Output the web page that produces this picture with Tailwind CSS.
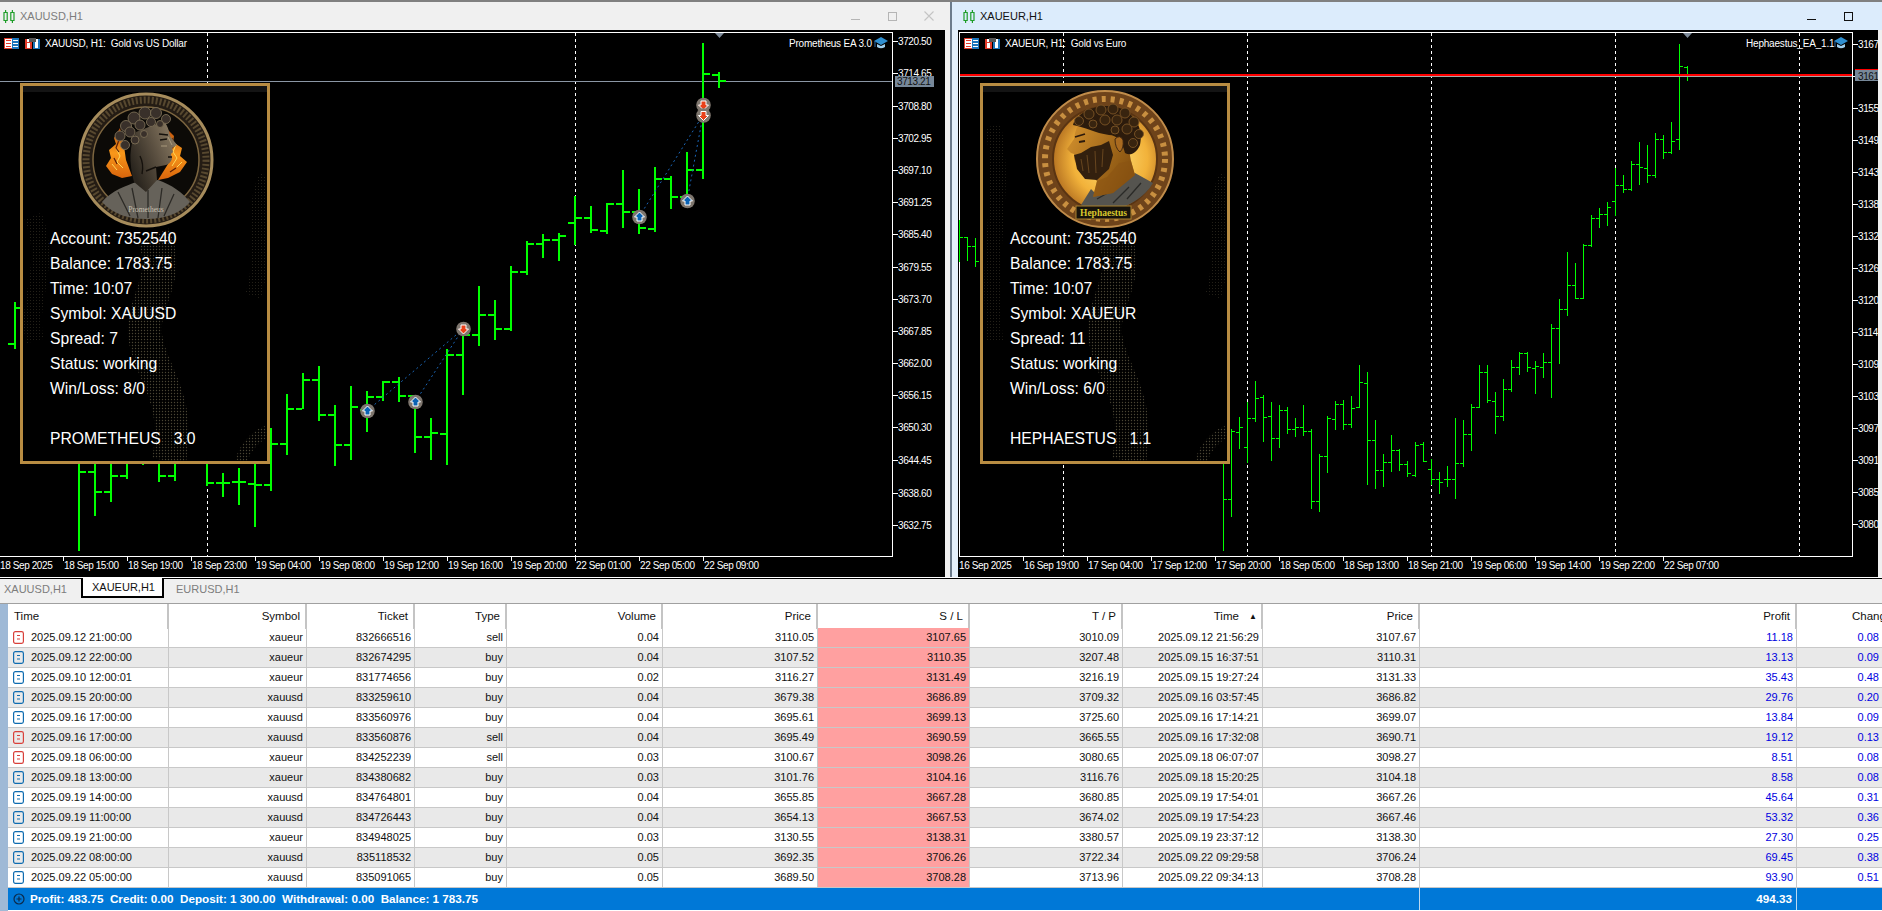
<!DOCTYPE html>
<html lang="en">
<head>
    <meta charset="UTF-8">
    <title>MetaTrader - XAUUSD, XAUEUR</title>
    <script src="https://cdn.jsdelivr.net/npm/@tailwindcss/browser@4"></script>
</head>
<body class="w-[1882px] h-[911px] overflow-hidden bg-[#f0f0f0] font-['Liberation_Sans',sans-serif]">
    <!-- shared patterns for the info panels -->
    <svg width="0" height="0" class="absolute">
        <defs>
            <pattern id="dots" width="3" height="3" patternUnits="userSpaceOnUse"><circle cx="1.5" cy="1.5" r="0.7" fill="#4a4534"/></pattern>
            <pattern id="dotsFaint" width="3" height="3" patternUnits="userSpaceOnUse"><circle cx="1.5" cy="1.5" r="0.5" fill="#2e2a20"/></pattern>
            <radialGradient id="heph" cx="0.55" cy="0.5" r="0.6"><stop offset="0" stop-color="#ffe27a"/><stop offset="0.6" stop-color="#f2b23a"/><stop offset="1" stop-color="#a8641c"/></radialGradient>
            <linearGradient id="hephSkin" x1="0" y1="0" x2="1" y2="0.6"><stop offset="0" stop-color="#d8952f"/><stop offset="1" stop-color="#84500f"/></linearGradient>
            <linearGradient id="flame" x1="0" y1="0" x2="0" y2="1"><stop offset="0" stop-color="#b84c0c"/><stop offset="0.5" stop-color="#f9981a"/><stop offset="1" stop-color="#d8640c"/></linearGradient>
            <linearGradient id="bronze" x1="1" y1="0" x2="0" y2="0.6"><stop offset="0" stop-color="#96866c"/><stop offset="0.55" stop-color="#5a4f40"/><stop offset="1" stop-color="#2a251e"/></linearGradient>
        </defs>
    </svg>

    <div class="border-t-2 border-[#808080] flex h-[577px]">
        <!-- XAUUSD window -->
        <div class="w-[950px] flex flex-col shrink-0">
            <div class="h-[28px] flex items-center pl-[3px] pr-[16px] bg-[#f0f0f0]">
                <svg width="12" height="15" viewBox="0 0 12 15" fill="none" stroke="#1f9e2a" stroke-width="1.2"><path d="M1 3.5h3.2v8H1zM2.6 1v2.500M2.6 11.500V14M7.800 3.500H11v8H7.800zM9.400 1v2.500M9.400 11.500V14"/></svg>
                <span class="ml-[5px] text-[11px] text-[#7d7d7d]">XAUUSD,H1</span>
                <div class="ml-auto flex items-center gap-[27px]">
                    <svg width="10" height="10" viewBox="0 0 10 10"><rect x="0" y="8" width="9" height="1" fill="#b5b5b5"/></svg>
                    <svg width="9" height="9" viewBox="0 0 9 9" fill="none"><rect x=".5" y=".5" width="8" height="8" stroke="#b5b5b5"/></svg>
                    <svg width="10" height="10" viewBox="0 0 10 10" stroke="#c4c4c4" stroke-width="1.1"><path d="M.5.5l9 9M9.500.5l-9 9"/></svg>
                </div>
            </div>
            <div class="relative flex-1 flex bg-black">
                <svg id="chart_usd" width="945" height="547" viewBox="0 30 945 547" class="block shrink-0" shape-rendering="crispEdges" font-family="Liberation Sans, sans-serif" font-size="10" letter-spacing="-0.4"></svg>
                <div class="w-[5px] bg-[#f0f0f0]"></div>
                <!-- info panel -->
                <div class="absolute left-[20px] top-[53px] w-[250px] h-[381px] bg-black border-[3px] border-[#b88c42] text-white text-[15.700px] leading-[25px] overflow-hidden">
                    <div class="h-[6px] bg-[#141414]"></div>
                    <svg class="absolute inset-0" width="244" height="375" viewBox="0 0 244 375" fill="none">
                        <path d="M130 150C150 190 118 215 122 250C128 290 158 310 146 375" stroke="url(#dots)" stroke-width="34"/>
                        <path d="M10 130C30 180 2 215 12 255" stroke="url(#dotsFaint)" stroke-width="18"/>
                        <path d="M244 90C226 130 244 170 230 210" stroke="url(#dotsFaint)" stroke-width="16"/>
                        <path d="M244 345C230 352 222 362 218 375" stroke="url(#dots)" stroke-width="12"/>
                    </svg>
                    <svg class="relative block ml-[53px] mt-[-2px]" width="140" height="140" viewBox="0 0 140 140">
                        <circle cx="70" cy="70" r="66" fill="#241c14" stroke="#a68c5c" stroke-width="3"/>
                        <circle cx="70" cy="70" r="60" fill="none" stroke="#57482f" stroke-width="7" stroke-dasharray="2 2"/>
                        <circle cx="70" cy="70" r="53" fill="#0c0a07" stroke="#7d6640" stroke-width="1.500"/>
                        <!-- flames -->
                        <path d="M44 38L38 48L40 54L33 60L35 68L30 76L36 84L46 88L56 86L50 70L48 56Z" fill="url(#flame)"/>
                        <path d="M90 38L98 46L97 52L106 58L104 66L111 72L104 82L92 88L82 90L92 74L94 56Z" fill="url(#flame)"/>
                        <path d="M40 58l4 8-3 6 6 6M36 74l5 6M100 54l-3 8 4 6-5 8M106 72l-5 5" stroke="#ffd85a" stroke-width="1" fill="none"/>
                        <path d="M43 50l-3 8 3 4M38 68l3 6M96 48l2 8-4 4M100 78l-6 4" stroke="#5c1f06" stroke-width="1.200" fill="none"/>
                        <!-- bust -->
                        <path d="M26 112C36 100 50 96 60 92L82 90C96 95 106 102 114 112C102 126 84 129 70 129C54 129 38 125 26 112Z" fill="#66625a"/>
                        <path d="M42 102l12 24M56 98l6 30M72 100l0 28M86 98l-4 30M98 104l-10 22" stroke="#2c2a26" stroke-width="1.300"/>
                        <path d="M60 42L88 31Q93 38 94 46L101 55L96 58L97 62L95 64L96 69Q94 74 90 75L80 77L81 90L70 102L58 92Q50 62 60 42Z" fill="url(#bronze)"/>
                        <path d="M83 44l9 1M84 50l7-1M92 67l4 0M80 77l-10 4M64 66q4 8 2 18" stroke="#15110c" stroke-width="1.400" fill="none"/>
                        <path d="M92 47l4 8M85 56l6 0" stroke="#b9a888" stroke-width="0.800" fill="none"/>
                        <g fill="#39302a" stroke="#7c6e56" stroke-width="0.900">
                            <circle cx="50" cy="36" r="5.500"/><circle cx="58" cy="28" r="6"/><circle cx="69" cy="23" r="6"/><circle cx="80" cy="23" r="5.500"/><circle cx="90" cy="29" r="4.500"/>
                            <circle cx="44" cy="46" r="5"/><circle cx="54" cy="42" r="5"/><circle cx="64" cy="35" r="5"/><circle cx="75" cy="32" r="4.500"/><circle cx="84" cy="34" r="3.500"/><circle cx="49" cy="55" r="4.500"/><circle cx="59" cy="50" r="4"/><circle cx="68" cy="44" r="3.500"/>
                        </g>
                        <text x="70" y="122" text-anchor="middle" font-size="7.500" fill="#c8c0b0" font-family="Liberation Serif, serif">Prometheus</text>
                    </svg>
                    <div class="relative pl-[27px] mt-[-4px]">
                        <div>Account: 7352540</div>
                        <div>Balance: 1783.75</div>
                        <div>Time: 10:07</div>
                        <div>Symbol: XAUUSD</div>
                        <div>Spread: 7</div>
                        <div>Status: working</div>
                        <div>Win/Loss: 8/0</div>
                        <div class="h-[25px]"></div>
                        <div class="whitespace-pre">PROMETHEUS   3.0</div>
                    </div>
                </div>
            </div>
        </div>
        <div class="w-[2px] bg-[#6b7b8c]"></div>
        <!-- XAUEUR window -->
        <div class="flex-1 flex flex-col bg-[#e4f0fb]">
            <div class="h-[28px] flex items-center pl-[11px] pr-[29px] bg-[#dcecfc]">
                <svg width="12" height="15" viewBox="0 0 12 15" fill="none" stroke="#1f9e2a" stroke-width="1.2"><path d="M1 3.5h3.2v8H1zM2.6 1v2.500M2.6 11.500V14M7.800 3.500H11v8H7.800zM9.400 1v2.500M9.400 11.500V14"/></svg>
                <span class="ml-[5px] text-[11px] text-[#111]">XAUEUR,H1</span>
                <div class="ml-auto flex items-center gap-[27px]">
                    <svg width="10" height="10" viewBox="0 0 10 10"><rect x="0" y="8" width="9" height="1" fill="#111"/></svg>
                    <svg width="9" height="9" viewBox="0 0 9 9" fill="none"><rect x=".5" y=".5" width="8" height="8" stroke="#111"/></svg>
                </div>
            </div>
            <div class="relative flex-1 flex">
                <div class="w-[6px]"></div>
                <svg id="chart_eur" width="920" height="547" viewBox="958 30 920 547" class="block shrink-0 bg-black" shape-rendering="crispEdges" font-family="Liberation Sans, sans-serif" font-size="10" letter-spacing="-0.4"></svg>
                <div class="w-[4px] bg-[#f0f0f0]"></div>
                <!-- info panel -->
                <div class="absolute left-[28px] top-[53px] w-[250px] h-[381px] bg-black border-[3px] border-[#b88c42] text-white text-[15.700px] leading-[25px] overflow-hidden">
                    <div class="h-[6px] bg-[#141414]"></div>
                    <svg class="absolute inset-0" width="244" height="375" viewBox="0 0 244 375" fill="none">
                        <path d="M130 150C150 190 118 215 122 250C128 290 158 310 146 375" stroke="url(#dots)" stroke-width="34"/>
                        <path d="M10 40C24 110 2 160 12 255" stroke="url(#dotsFaint)" stroke-width="16"/>
                        <path d="M244 90C226 130 244 170 230 210" stroke="url(#dotsFaint)" stroke-width="16"/>
                        <path d="M244 345C230 352 222 362 218 375" stroke="url(#dots)" stroke-width="12"/>
                    </svg>
                    <svg class="relative block mx-auto mt-[-3px]" width="140" height="140" viewBox="0 0 140 140">
                        <circle cx="70" cy="70" r="68" fill="#6e431a" stroke="#c08c4a" stroke-width="2"/>
                        <circle cx="70" cy="70" r="60" fill="none" stroke="#c88f40" stroke-width="6" stroke-dasharray="4 5"/>
                        <circle cx="70" cy="70" r="52" fill="url(#heph)" stroke="#5a3412" stroke-width="2"/>
                        <!-- toga -->
                        <path d="M46 116L56 100L62 106L82 100L100 84L118 94C110 108 92 120 70 122C60 122 52 120 46 116Z" fill="#55544f"/>
                        <path d="M62 110l14-8M78 114l16-16M92 110l14-16" stroke="#2a2a27" stroke-width="1.300"/>
                        <!-- head -->
                        <path d="M44 32L40 44L39 50L32 60L36 64L39 65L39 70L44 80L55 86L62 92L58 108L78 104L100 86L96 72L92 50L76 30Z" fill="url(#hephSkin)"/>
                        <path d="M62 92L72 88L84 74L96 72L100 86L78 104L58 108Z" fill="#8b5413" opacity="0.6"/>
                        <path d="M40 70L39 66L46 64L56 58L66 56L74 52L78 66L74 80L62 91L50 90L42 80Z" fill="#33200e"/>
                        <path d="M46 70l2 12M52 66l2 18M60 62l1 22M68 60l-1 18" stroke="#6d4a20" stroke-width="0.900"/>
                        <path d="M40 48l10-3M44 53l6-1" stroke="#2c1a0c" stroke-width="1.800"/>
                        <path d="M38 36C42 22 66 13 84 19C100 24 109 40 105 56C101 65 95 67 90 64C87 52 82 46 74 46C60 44 50 38 38 36Z" fill="#2c1b0c"/>
                        <g fill="#38240f" stroke="#7c5526" stroke-width="0.900">
                            <circle cx="44" cy="32" r="4.500"/><circle cx="54" cy="25" r="5"/><circle cx="66" cy="21" r="5"/><circle cx="78" cy="20" r="5"/><circle cx="90" cy="24" r="5"/><circle cx="99" cy="33" r="5"/><circle cx="104" cy="45" r="4.500"/>
                            <circle cx="58" cy="35" r="4"/><circle cx="70" cy="31" r="5"/><circle cx="82" cy="31" r="5"/><circle cx="92" cy="40" r="5"/><circle cx="98" cy="54" r="4.500"/><circle cx="80" cy="41" r="4"/>
                        </g>
                        <path d="M80 50q5-5 8 1q1 8-3 12q-5-4-5-13Z" fill="#a96a20" stroke="#3a2210" stroke-width="0.900"/>
                        <rect x="41" y="117" width="55" height="13" fill="#17130c" stroke="#a8802f"/>
                        <text x="68.500" y="127" text-anchor="middle" font-size="9.500" font-weight="700" fill="#d8c82c" font-family="Liberation Serif, serif">Hephaestus</text>
                    </svg>
                    <div class="relative pl-[27px] mt-[-3px]">
                        <div>Account: 7352540</div>
                        <div>Balance: 1783.75</div>
                        <div>Time: 10:07</div>
                        <div>Symbol: XAUEUR</div>
                        <div>Spread: 11</div>
                        <div>Status: working</div>
                        <div>Win/Loss: 6/0</div>
                        <div class="h-[25px]"></div>
                        <div class="whitespace-pre">HEPHAESTUS   1.1</div>
                    </div>
                </div>
            </div>
        </div>
    </div>

    <!-- Tabs -->
    <div class="h-[1px] bg-white"></div>
    <div class="h-[1px] bg-black"></div>
    <div class="h-[24px] flex items-start text-[11px] text-[#7d7d7d]">
        <div class="w-[81px] h-[19px] pl-[4px] leading-[20px]">XAUUSD,H1</div>
        <div class="w-[83px] h-[20px] pl-[9px] leading-[19px] bg-white border-x-2 border-b-2 border-black text-[#111] mt-[-1px]">XAUEUR,H1</div>
        <div class="h-[19px] pl-[12px] leading-[20px]">EURUSD,H1</div>
    </div>

    <!-- Trade history -->
    <div class="h-[308px] bg-white border-t border-[#a0a0a0] flex text-[11px] text-[#111]">
        <div class="w-[8px] h-full bg-[#9fb9d6] shrink-0"></div>
        <div class="flex-1 overflow-hidden">
            <div class="grid grid-cols-[161px_138px_108px_92px_156px_155px_152px_153px_140px_157px_377px_85px] h-[24px] leading-[24px] text-[#111] text-[11.500px] *:border-r-2 *:border-[#c4c4c4] *:pr-[5px] *:text-right">
                <div class="!text-left pl-[6px]">Time</div>
                <div>Symbol</div>
                <div>Ticket</div>
                <div>Type</div>
                <div>Volume</div>
                <div>Price</div>
                <div>S / L</div>
                <div>T / P</div>
                <div class="!pr-[4px]">Time <span class="text-[8px] ml-[7px] align-[1px]">▲</span></div>
                <div>Price</div>
                <div>Profit</div>
                <div class="!border-r-0 !text-left pl-[55px] whitespace-nowrap overflow-hidden">Change</div>
            </div>
            <div id="table_rows"></div>
            <div class="grid grid-cols-[1412px_377px_85px] h-[22px] leading-[22px] bg-[#0078d7] text-white text-[11.700px] font-bold">
                <div class="flex items-center pl-[5px] border-r border-[#bcd8f0]">
                    <svg width="12" height="12" viewBox="0 0 12 12" fill="none" stroke="#0c2a4a" stroke-width="1.200"><circle cx="6" cy="6" r="5"/><path d="M3.500 6h5M6 3.500v5"/></svg>
                    <span class="ml-[5px] whitespace-pre">Profit: 483.75  Credit: 0.00  Deposit: 1 300.00  Withdrawal: 0.00  Balance: 1 783.75</span>
                </div>
                <div class="text-right pr-[4px] border-r border-[#bcd8f0]">494.33</div>
                <div></div>
            </div>
        </div>
    </div>

    <script>
        // chart data: [x, high, low, open, close] in page pixels
        var usdBars = [
            [15,302,349,344,308],[79,440,551,null,472],[95,440,516,472,492],[111,440,502,492,476],[127,440,479,476,null],
            [143,440,465,null,null],[159,440,482,null,476],[175,440,481,476,null],[207,440,486,null,483],[223,473,497,483,483],
            [239,468,505,482,482],[255,440,527,484,485],[271,428,491,485,444],[287,394,455,444,409],[303,373,409,409,380],
            [319,366,421,380,415],[335,405,466,415,445],[351,386,460,445,407],[367,391,432,410,397],[383,381,401,397,382],
            [399,377,402,382,396],[415,396,453,396,437],[431,418,460,437,433],[447,349,465,434,355],[463,332,395,355,335],
            [479,286,346,335,315],[495,300,340,315,329],[511,266,331,329,272],[527,241,275,272,244],[543,234,258,244,240],
            [559,233,261,240,236],[575,196,245,223,218],[591,206,233,218,230],[607,203,234,231,204],[623,170,228,204,212],
            [639,189,234,212,228],[655,167,232,229,179],[671,176,209,179,197],[687,152,200,197,170],[703,43,179,170,74],[719,72,88,75,81]
        ];
        var eurBars = [
            [959,220,262,null,237],[967,237,261,237,246],[975,238,267,246,261],
            [1223,440,551,null,499],[1231,429,517,499,431],[1239,417,449,432,427],[1247,402,463,447,418],[1255,381,422,418,398],
            [1263,395,442,397,417],[1271,402,461,416,438],[1279,405,448,438,410],[1287,407,434,410,429],[1295,418,437,429,427],
            [1303,405,436,427,431],[1311,429,509,431,501],[1319,454,512,501,456],[1327,416,473,456,418],[1335,401,430,419,404],
            [1343,400,430,404,424],[1351,396,428,424,408],[1359,365,408,407,382],[1367,372,485,383,440],[1375,420,489,440,470],
            [1383,454,487,470,462],[1391,435,472,462,450],[1399,449,471,450,464],[1407,461,477,464,473],[1415,442,477,475,445],
            [1423,442,462,444,461],[1431,459,485,469,479],[1439,472,494,479,482],[1447,466,487,479,479],[1455,418,499,479,463],
            [1463,420,467,463,434],[1471,404,451,434,407],[1479,365,408,407,372],[1487,365,403,372,400],[1495,392,434,401,416],
            [1503,379,421,416,389],[1511,360,392,389,367],[1519,352,375,367,353],[1527,352,372,353,367],[1535,361,394,368,366],
            [1543,353,378,367,362],[1551,324,398,362,328],[1559,299,364,328,309],[1567,252,316,309,285],[1575,263,299,285,298],
            [1583,244,299,298,245],[1591,215,247,245,218],[1599,208,228,218,214],[1607,202,226,214,207],[1615,168,216,201,185],
            [1623,175,193,185,189],[1631,161,191,189,164],[1639,142,185,164,167],[1647,145,183,168,175],[1655,133,178,175,139],
            [1663,135,159,139,152],[1671,122,154,152,141],[1679,44,150,139,66],[1687,66,81,67,74]
        ];

        function rect(x, y, w, h, fill) {
            return '<rect x="' + x + '" y="' + y + '" width="' + w + '" height="' + h + '" fill="' + fill + '"/>';
        }

        function label(x, y, txt, fill) {
            return '<text x="' + x + '" y="' + y + '" fill="' + (fill || '#fff') + '" shape-rendering="auto">' + txt + '</text>';
        }

        function heading(x, y, txt) {
            return '<text x="' + x + '" y="' + y + '" fill="#fff" letter-spacing="-0.2" shape-rendering="auto">' + txt + '</text>';
        }

        function dashed(x) {
            return '<path d="M' + (x + 0.5) + ' 33V556" stroke="#fff" stroke-dasharray="3 3"/>';
        }

        function marker(x, y, up) {
            var s = '<g shape-rendering="auto"><circle cx="' + x + '" cy="' + y + '" r="7.300" fill="#7e766e"/>';
            if (up) {
                s += '<path d="M' + x + ' ' + (y - 5) + 'l5 5h-2.500v4h-5v-4h-2.500z" fill="#0a62b4" stroke="#fff" stroke-width="1"/>';
            } else {
                s += '<path d="M' + x + ' ' + (y + 5) + 'l5-5h-2.500v-4h-5v4h-2.500z" fill="#e8401a" stroke="#fff" stroke-width="1"/>';
            }
            return s + '</g>';
        }

        function drawBars(bars, lw, tick, th) {
            var out = '';
            for (var i in bars) {
                var b = bars[i];
                var x = b[0] - Math.floor(lw / 2);
                out += rect(x, b[1], lw, b[2] - b[1], '#00ff00');
                if (b[3] !== null) out += rect(x - tick, b[3] - Math.floor(th / 2), tick, th, '#00ff00');
                if (b[4] !== null) out += rect(x + lw, b[4] - Math.floor(th / 2), tick, th, '#00ff00');
            }
            return out;
        }

        function hat(x) {
            return '<g shape-rendering="auto"><path d="M' + x + ' 41l7-4 7 4-7 4z" fill="#2f8fd0"/><path d="M' + (x + 3) + ' 44v3q4 2.500 8 0v-3l-4 2z" fill="#9fd0ef"/><path d="M' + (x + 1) + ' 41v6" stroke="#2a6fae"/></g>';
        }

        function mtIcons() {
            return '<rect x="4.500" y="38.500" width="14" height="10" fill="#fff" stroke="#e03a2a"/>' + rect(12, 38, 7, 11, '#1b75bc') +
                rect(6, 40, 5, 1, '#e03a2a') + rect(6, 43, 5, 1, '#e03a2a') + rect(6, 46, 5, 1, '#e03a2a') +
                rect(13, 40, 5, 1, '#fff') + rect(13, 43, 5, 1, '#fff') + rect(13, 46, 5, 1, '#fff') +
                rect(25, 39, 7, 10, '#e03a2a') + rect(33, 39, 7, 10, '#1b75bc') + rect(27, 39, 11, 3, '#fff') + rect(29, 38, 7, 4, '#555') + rect(27, 43, 3, 5, '#fff') + rect(35, 42, 3, 6, '#fff');
        }

        // XAUUSD chart
        function drawUsd() {
            var s = dashed(207) + dashed(575);
            s += rect(0, 81, 892, 1, '#8b97a5');
            s += rect(0, 32, 892, 1, '#fff') + rect(892, 32, 1, 525, '#fff') + rect(0, 556, 892, 1, '#fff');
            s += drawBars(usdBars, 2, 6, 2);

            s += '<path shape-rendering="auto" d="M367 411L463 329M415 402L463 329M639 217L703 115M687 201L703 115" stroke="#1a64b4" stroke-dasharray="2 3" fill="none"/>';
            s += marker(367.500, 411, true) + marker(415.500, 402, true) + marker(463.500, 329, false);
            s += marker(639.500, 217, true) + marker(687.500, 201, true) + marker(703.500, 105, false) + marker(703.500, 115.500, false);

            s += '<path d="M715 33h9l-4.500 5z" fill="#7d8a99" shape-rendering="auto"/>';
            s += mtIcons() + heading(45, 47, 'XAUUSD, H1:&#160; Gold vs US Dollar');
            s += heading(789, 47, 'Prometheus EA 3.0') + hat(874);

            var prices = [[41,'3720.50'],[73,'3714.65'],[106,'3708.80'],[138,'3702.95'],[170,'3697.10'],[202,'3691.25'],[234,'3685.40'],[267,'3679.55'],[299,'3673.70'],[331,'3667.85'],[363,'3662.00'],[395,'3656.15'],[427,'3650.30'],[460,'3644.45'],[493,'3638.60'],[525,'3632.75']];
            for (var i in prices) {
                s += rect(893, prices[i][0], 5, 1, '#fff') + label(898, prices[i][0] + 4, prices[i][1]);
            }
            s += rect(895, 76, 39, 11, '#778899') + label(897, 85, '3713.21', '#111');

            var times = ['18 Sep 15:00','18 Sep 19:00','18 Sep 23:00','19 Sep 04:00','19 Sep 08:00','19 Sep 12:00','19 Sep 16:00','19 Sep 20:00','22 Sep 01:00','22 Sep 05:00','22 Sep 09:00'];
            s += label(0, 569, '18 Sep 2025');
            for (var t in times) {
                var x = 63 + 64 * t;
                s += rect(x, 557, 1, 4, '#fff') + label(x + 1, 569, times[t]);
            }
            document.getElementById('chart_usd').innerHTML = s;
        }

        // XAUEUR chart
        function drawEur() {
            var s = '';
            var lines = [1063, 1247, 1431, 1615, 1799];
            for (var l in lines) s += dashed(lines[l]);
            s += rect(959, 32, 893, 1, '#fff') + rect(1852, 32, 1, 525, '#fff') + rect(959, 556, 893, 1, '#fff') + rect(959, 32, 1, 525, '#fff');
            s += drawBars(eurBars, 1, 3, 1);
            s += rect(960, 74, 892, 2, '#ff0000') + rect(960, 76, 892, 1, '#a8a8a8');

            s += '<path d="M1683 33h9l-4.500 5z" fill="#7d8a99" shape-rendering="auto"/>';
            s += '<g transform="translate(960 0)">' + mtIcons() + '</g>' + heading(1005, 47, 'XAUEUR, H1:&#160; Gold vs Euro');
            s += heading(1746, 47, 'Hephaestus_EA_1.1') + hat(1834);

            var prices = ['3167',null,'3155','3149','3143','3138','3132','3126','3120','3114','3109','3103','3097','3091','3085','3080'];
            for (var i in prices) {
                if (prices[i] === null) continue;
                var y = 44 + 32 * i;
                s += rect(1853, y, 5, 1, '#fff') + label(1858, y + 4, prices[i]);
            }
            s += rect(1853, 76, 5, 1, '#fff');
            s += rect(1855, 69, 23, 1, '#ff0000') + rect(1855, 70, 23, 11, '#778899') + label(1858, 79.500, '3161', '#111');

            var times = ['16 Sep 19:00','17 Sep 04:00','17 Sep 12:00','17 Sep 20:00','18 Sep 05:00','18 Sep 13:00','18 Sep 21:00','19 Sep 06:00','19 Sep 14:00','19 Sep 22:00','22 Sep 07:00'];
            s += label(959, 569, '16 Sep 2025');
            for (var t in times) {
                var x = 1023 + 64 * t;
                s += rect(x, 557, 1, 4, '#fff') + label(x + 1, 569, times[t]);
            }
            document.getElementById('chart_eur').innerHTML = s;
        }

        // history table
        var trades = [
            ['2025.09.12 21:00:00','xaueur','832666516','sell','0.04','3110.05','3107.65','3010.09','2025.09.12 21:56:29','3107.67','11.18','0.08'],
            ['2025.09.12 22:00:00','xaueur','832674295','buy','0.04','3107.52','3110.35','3207.48','2025.09.15 16:37:51','3110.31','13.13','0.09'],
            ['2025.09.10 12:00:01','xaueur','831774656','buy','0.02','3116.27','3131.49','3216.19','2025.09.15 19:27:24','3131.33','35.43','0.48'],
            ['2025.09.15 20:00:00','xauusd','833259610','buy','0.04','3679.38','3686.89','3709.32','2025.09.16 03:57:45','3686.82','29.76','0.20'],
            ['2025.09.16 17:00:00','xauusd','833560976','buy','0.04','3695.61','3699.13','3725.60','2025.09.16 17:14:21','3699.07','13.84','0.09'],
            ['2025.09.16 17:00:00','xauusd','833560876','sell','0.04','3695.49','3690.59','3665.55','2025.09.16 17:32:08','3690.71','19.12','0.13'],
            ['2025.09.18 06:00:00','xaueur','834252239','sell','0.03','3100.67','3098.26','3080.65','2025.09.18 06:07:07','3098.27','8.51','0.08'],
            ['2025.09.18 13:00:00','xaueur','834380682','buy','0.03','3101.76','3104.16','3116.76','2025.09.18 15:20:25','3104.18','8.58','0.08'],
            ['2025.09.19 14:00:00','xauusd','834764801','buy','0.04','3655.85','3667.28','3680.85','2025.09.19 17:54:01','3667.26','45.64','0.31'],
            ['2025.09.19 11:00:00','xauusd','834726443','buy','0.04','3654.13','3667.53','3674.02','2025.09.19 17:54:23','3667.46','53.32','0.36'],
            ['2025.09.19 21:00:00','xaueur','834948025','buy','0.03','3130.55','3138.31','3380.57','2025.09.19 23:37:12','3138.30','27.30','0.25'],
            ['2025.09.22 08:00:00','xauusd','835118532','buy','0.05','3692.35','3706.26','3722.34','2025.09.22 09:29:58','3706.24','69.45','0.38'],
            ['2025.09.22 05:00:00','xauusd','835091065','buy','0.05','3689.50','3708.28','3713.96','2025.09.22 09:34:13','3708.28','93.90','0.51']
        ];

        function docIcon(type) {
            var col = type === 'sell' ? '#d9403a' : '#0f6cb0';
            return '<svg width="11" height="13" viewBox="0 0 11 13" fill="none" stroke="' + col + '" stroke-width="1.200" class="shrink-0"><rect x=".6" y=".6" width="9.800" height="11.800" rx="1.800"/><path d="M4 4.500h3M4 8h3"/></svg>';
        }

        function drawTable() {
            var output = '';
            for (var i in trades) {
                var t = trades[i];
                var bg = i % 2 === 1 ? 'bg-[#e9e9e9]' : 'bg-white';
                output += '<div class="grid grid-cols-[161px_138px_108px_92px_156px_155px_152px_153px_140px_157px_377px_85px] h-[20px] leading-[19px] border-b border-[#c8c8c8] *:border-r *:border-[#c8c8c8] *:pr-[3px] *:text-right ' + bg + '">' +
                    '<div class="!text-left flex items-center pl-[5px]">' + docIcon(t[3]) + '<span class="ml-[7px]">' + t[0] + '</span></div>' +
                    '<div>' + t[1] + '</div><div>' + t[2] + '</div><div>' + t[3] + '</div><div>' + t[4] + '</div><div>' + t[5] + '</div>' +
                    '<div class="bg-[#ffa0a0]">' + t[6] + '</div>' +
                    '<div>' + t[7] + '</div><div>' + t[8] + '</div><div>' + t[9] + '</div>' +
                    '<div class="text-[#0000e0]">' + t[10] + '</div>' +
                    '<div class="text-[#0000e0] !border-r-0">' + t[11] + '</div>' +
                    '</div>';
            }
            document.getElementById('table_rows').innerHTML = output;
        }

        drawUsd();
        drawEur();
        drawTable();
    </script>
</body>
</html>
